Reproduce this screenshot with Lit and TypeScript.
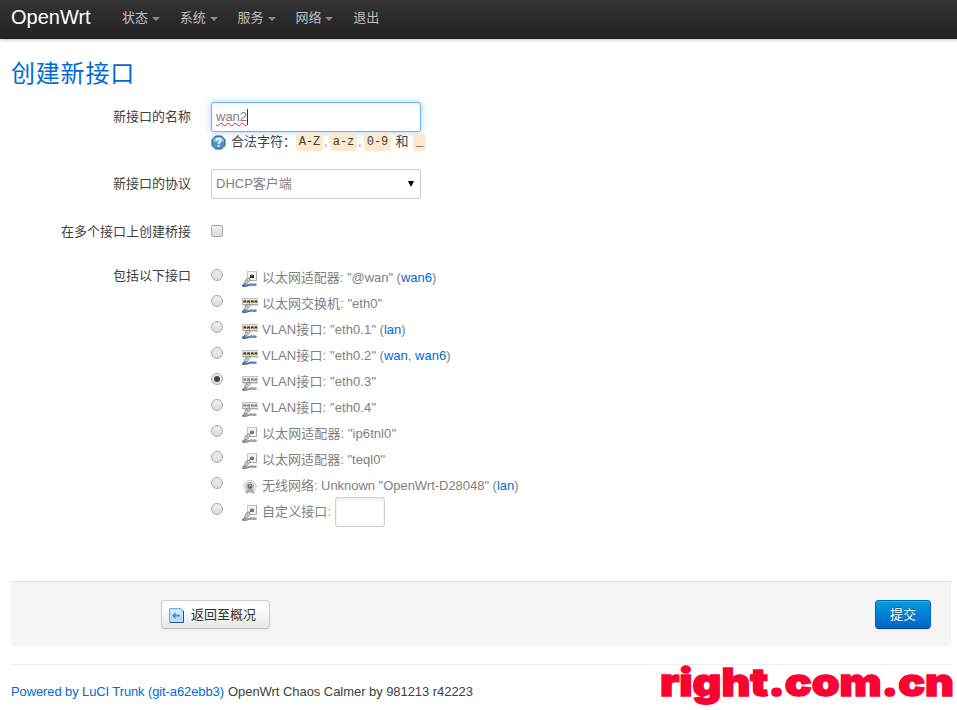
import { LitElement, html, css, svg, nothing } from "lit";
import { customElement, property } from "lit/decorators.js";

type IconKind = "adapter" | "switch" | "wifi";

interface Iface {
  kind: IconKind;
  active: boolean;
  label: string;
  width: number;
  links?: string[];
  checked?: boolean;
  custom?: boolean;
}

const MENU: { text: string; drop: boolean }[] = [
  { text: "状态", drop: true },
  { text: "系统", drop: true },
  { text: "服务", drop: true },
  { text: "网络", drop: true },
  { text: "退出", drop: false },
];

const IFACES: Iface[] = [
  { kind: "adapter", active: true, label: '以太网适配器: "@wan"', width: 131, links: ["wan6"] },
  { kind: "switch", active: true, label: '以太网交换机: "eth0"', width: 120 },
  { kind: "switch", active: true, label: 'VLAN接口: "eth0.1"', width: 114, links: ["lan"] },
  { kind: "switch", active: true, label: 'VLAN接口: "eth0.2"', width: 114, links: ["wan", "wan6"] },
  { kind: "switch", active: false, label: 'VLAN接口: "eth0.3"', width: 114, checked: true },
  { kind: "switch", active: false, label: 'VLAN接口: "eth0.4"', width: 114 },
  { kind: "adapter", active: false, label: '以太网适配器: "ip6tnl0"', width: 134 },
  { kind: "adapter", active: false, label: '以太网适配器: "teql0"', width: 123 },
  { kind: "wifi", active: false, label: '无线网络: Unknown "OpenWrt-D28048"', width: 227, links: ["lan"] },
  { kind: "adapter", active: false, label: "自定义接口:", width: 69, custom: true },
];

@customElement("iface-icon")
export class IfaceIcon extends LitElement {
  @property() kind: IconKind = "adapter";
  @property({ type: Boolean }) active = false;

  static styles = css`
    :host { display: block; width: 16px; height: 16px; }
    svg { display: block; }
  `;

  private cable() {
    const c = this.active ? "#5f8fc8" : "#a2a2a2";
    const d = this.active ? "#3c659e" : "#858585";
    return svg`
      <path d="M4.5 8 L7.5 6.8 L8 9 L5.5 12.2 L3 13.2 L2.8 11 Z" fill="#dcdcdc" stroke="#737373" stroke-width=".8"/>
      <path d="M4.6 9 L6 10.4" stroke="#555" stroke-width=".7"/>
      <path d="M3.2 12.8 L1 14.8 C5 15.8 7.5 13 10 13.6 S13 14 14.5 13.4" fill="none" stroke="${d}" stroke-width="2"/>
      <path d="M2 14.2 C5 15 7.5 12.6 10 13.1 S13 13.5 14.2 13" fill="none" stroke="${c}" stroke-width="1.2"/>`;
  }

  render() {
    if (this.kind === "wifi") {
      return html`<svg width="16" height="16" viewBox="0 0 16 16">
        <g fill="none" stroke="#c4c4c4" stroke-width="1">
          <circle cx="8" cy="7.3" r="6"/><circle cx="8" cy="7.3" r="4" stroke="#a2a2a2"/>
        </g>
        <circle cx="8" cy="7.2" r="2.7" fill="#6e6e6e"/>
        <circle cx="8" cy="6.6" r="1" fill="#bbb"/>
        <path d="M5 10.5 L3 15 L6.3 12.6 Z M11 10.5 L13 15 L9.7 12.6 Z" fill="#969696"/>
        <path d="M6 10 H10 L12 15 L8 12.6 L4 15 Z" fill="#a8a8a8"/>
      </svg>`;
    }
    if (this.kind === "adapter") {
      return html`<svg width="16" height="16" viewBox="0 0 16 16">
        <rect x="5.5" y=".5" width="9" height="9" fill="#f2f2f2" stroke="#c6c6c6"/>
        <path d="M14.5 1 V9.5 H8" fill="none" stroke="#aaa"/>
        <rect x="8" y="4" width="4" height="3" fill="${this.active ? "#2c2c2c" : "#777"}"/>
        <rect x="9" y="3.3" width="2" height="1.2" fill="${this.active ? "#949427" : "#999"}"/>
        ${this.cable()}
      </svg>`;
    }
    const hole = this.active ? "#333" : "#7d7d7d";
    const pin = this.active ? "#d2c63a" : "#c8c8c8";
    return html`<svg width="16" height="16" viewBox="0 0 16 16">
      <rect x="0" y="1" width="16" height="7" fill="#e7e7e7"/>
      <path d="M0 1.5 H16 M.5 1 V8" stroke="#c2c2c2"/>
      <path d="M1 7.8 H16" stroke="#8c8c8c"/>
      ${[1.5, 5.2, 8.9, 12.6].map(
        (x) => svg`<rect x=${x} y="3.4" width="2.7" height="2.6" fill=${hole}/><rect x=${x + 0.6} y="5" width="1.5" height="1.2" fill=${pin}/>`
      )}
      ${this.cable()}
    </svg>`;
  }
}

@customElement("fit-text")
export class FitText extends LitElement {
  @property() text = "";
  @property({ type: Number }) width = 0;

  static styles = css`
    :host { display: inline-block; vertical-align: top; }
    svg { display: block; overflow: visible; }
    text { fill: currentColor; font: inherit; white-space: pre; }
  `;

  render() {
    return html`<svg width=${this.width} height="18"><text x="0" y="13" textLength=${this.width}>${this.text}</text></svg>`;
  }
}

@customElement("app-root")
export class AppRoot extends LitElement {
  static styles = css`
    :host {
      display: block;
      position: relative;
      height: 710px;
      overflow: hidden;
      background: #fff;
      color: #404040;
      font: 13px/18px "Liberation Sans", "Noto Sans CJK SC", sans-serif;
    }
    * { box-sizing: border-box; }
    a { color: #0069d6; text-decoration: none; }
    .bar {
      height: 39px;
      display: flex;
      align-items: flex-start;
      padding-left: 11px;
      background: linear-gradient(#333, #222);
      box-shadow: 0 1px 3px rgba(0, 0, 0, .25), inset 0 -1px 0 rgba(0, 0, 0, .1);
    }
    .brand { width: 111px; color: #fff; font-size: 20px; line-height: 34px; }
    .menu { display: flex; }
    .item { width: 57.8px; display: flex; color: #bfbfbf; line-height: 36px; }
    .caret {
      margin: 17px 0 0 4px;
      width: 0;
      height: 0;
      border: 4px solid transparent;
      border-top-color: #8a8a8a;
      border-bottom: 0;
    }
    .content { padding: 17px 6px 0 11px; }
    h2 { margin: 0; height: 36px; font-size: 24px; line-height: 36px; font-weight: 400; color: #0069d6; letter-spacing: .8px; }
    .form { padding-top: 10px; display: grid; grid-template-columns: 180px 1fr; column-gap: 20px; grid-template-rows: 67px 54px 43px 1fr; }
    .label { text-align: right; line-height: 18px; padding-top: 6px; }
    .label.check { padding-top: 0; }
    .label.list { padding-top: 1px; }
    .box {
      width: 210px;
      height: 30px;
      border: 1px solid #ccc;
      border-radius: 3px;
      background: #fff;
      color: #808080;
      display: flex;
      align-items: center;
      padding: 0 4px;
      box-shadow: inset 0 1px 3px rgba(0, 0, 0, .1);
    }
    .box.focus { border-color: #6cb5ed; box-shadow: inset 0 1px 3px rgba(0, 0, 0, .1), 0 0 7px rgba(82, 168, 236, .55); }
    .box.select { justify-content: space-between; padding-right: 6px; box-shadow: none; }
    .box.small { width: 50px; margin: -6px 0 0 4px; }
    .typed { text-decoration: underline wavy #e8262c 1px; text-underline-offset: 1px; text-decoration-skip-ink: none; }
    .cursor { width: 1px; height: 16px; background: #333; }
    .arrow { border: 3.5px solid transparent; border-top: 6px solid #000; border-bottom: 0; }
    .hint { display: flex; align-items: center; height: 18px; margin-top: 1px; white-space: pre; }
    .hint svg { margin: 1px 5px 0 0; }
    .comma { color: #999; width: 7px; padding-left: 1px; }
    code {
      height: 17px;
      width: 27px;
      text-align: center;
      border-radius: 3px;
      background: #fee9cc;
      font: 12px/17px "Liberation Mono", monospace;
      color: #404040;
    }
    .and { width: 22px; text-align: center; }
    .under { width: 13px; }
    .tick { display: block; width: 12px; height: 12px; margin-top: 2px; border: 1px solid #aaa; border-radius: 2px; background: linear-gradient(#eee, #ddd); }
    .row { height: 26px; display: flex; align-items: flex-start; }
    .radio { width: 12px; height: 12px; margin: 3px 19px 0 0; flex: none; border: 1px solid #aaa; border-radius: 50%; background: linear-gradient(#eee, #dcdcdc); display: grid; place-items: center; }
    .dot { width: 6px; height: 6px; border-radius: 50%; background: #444; }
    iface-icon { margin: 5px 4px 0 0; }
    .desc { color: #808080; display: flex; padding-top: 3px; white-space: pre; }
    .actions {
      margin-top: 55px;
      margin-right: 0;
      height: 65px;
      padding: 18px 20px 0 150px;
      border-top: 1px solid #ddd;
      border-radius: 0 0 3px 3px;
      background: #f5f5f5;
      display: flex;
      justify-content: space-between;
      align-items: flex-start;
    }
    .btn {
      height: 29px;
      border: 1px solid #ccc;
      border-bottom-color: #bbb;
      border-radius: 4px;
      background: linear-gradient(#fff 25%, #e6e6e6);
      box-shadow: inset 0 1px 0 rgba(255, 255, 255, .2), 0 1px 2px rgba(0, 0, 0, .05);
      color: #333;
      line-height: 27px;
      display: flex;
      padding: 0 7px;
      width: 109px;
    }
    .btn svg { margin: 7px 7px 0 0; }
    .btn.primary { width: 56px; padding: 0 14px; color: #fff; background: linear-gradient(#049cdb, #0064cd); border-color: #0064cd #0064cd #003f81; text-shadow: 0 -1px 0 rgba(0, 0, 0, .25); }
    .footer { margin-top: 18px; border-top: 1px solid #eee; padding-top: 18px; display: flex; }
    .mark { position: absolute; left: 656px; top: 662px; }
    .mark text { font-family: Inter, sans-serif; font-weight: 900; font-size: 39px; fill: #ff0033; stroke: #ff0033; stroke-width: 1.5px; }
  `;

  private renderRow(i: Iface) {
    return html`<div class="row">
      <span class="radio">${i.checked ? html`<span class="dot"></span>` : nothing}</span>
      <iface-icon kind=${i.kind} ?active=${i.active}></iface-icon>
      <span class="desc"
        ><fit-text text=${i.label} width=${i.width}></fit-text>${i.links
          ? html`<span> (${i.links.map((l, n) => html`${n ? ", " : ""}<a>${l}</a>`)})</span>`
          : nothing}${i.custom ? html`<span class="box small"></span>` : nothing}</span>
    </div>`;
  }

  render() {
    return html`
      <header class="bar">
        <span class="brand"><span>OpenWrt</span></span>
        <nav class="menu">
          ${MENU.map((m) => html`<span class="item">${m.text}${m.drop ? html`<i class="caret"></i>` : nothing}</span>`)}
        </nav>
      </header>
      <main class="content">
        <h2>创建新接口</h2>
        <section class="form">
          <span class="label">新接口的名称</span>
          <div>
            <div class="box focus"><span class="typed">wan2</span><i class="cursor"></i></div>
            <div class="hint">
              <svg width="15" height="15" viewBox="0 0 15 15">
                <path d="M4.5 1 H10.5 L14 4.5 V10.5 L10.5 14 H4.5 L1 10.5 V4.5 Z" fill="#4d93d2" stroke="#27588f"/>
                <path d="M4.8 2 H10.2 L13 4.8 V7 H2 V4.8 Z" fill="#79b5e5"/>
                <path d="M5.3 5.7 C5.3 2.9 9.8 3.1 9.8 5.5 C9.8 7 7.6 7 7.6 8.9" fill="none" stroke="#fff" stroke-width="1.6"/>
                <rect x="6.7" y="10" width="1.8" height="1.8" fill="#fff"/>
              </svg><span>合法字符：</span><code>A-Z</code><span class="comma">,</span><code>a-z</code><span class="comma">,</span><code>0-9</code><span class="and">和</span><code class="under">_</code>
            </div>
          </div>
          <span class="label">新接口的协议</span>
          <div><div class="box select"><span>DHCP客户端</span><i class="arrow"></i></div></div>
          <span class="label check">在多个接口上创建桥接</span>
          <div><i class="tick"></i></div>
          <span class="label list">包括以下接口</span>
          <div>${IFACES.map((i) => this.renderRow(i))}</div>
        </section>
        <section class="actions">
          <span class="btn"><svg width="15" height="15" viewBox="0 0 15 15">
              <path d="M.5 .5 H12 L14.5 3 V14.5 H.5 Z" fill="#b9dcf8" stroke="#7eace0"/>
              <path d="M14.5 3 V14.5 H1" fill="none" stroke="#31537f"/>
              <path d="M2 2 H11 V5 H13 V7 H2 Z" fill="#dcedfb"/>
              <path d="M3 7.5 L6.5 4 V6.5 H11 V8.5 H6.5 V11 Z" fill="#4a8cd8"/>
            </svg>返回至概况</span>
          <span class="btn primary">提交</span>
        </section>
        <footer class="footer">
          <a><fit-text text="Powered by LuCI Trunk (git-a62ebb3)" width="213"></fit-text></a>
          <fit-text style="margin-left:4px" text="OpenWrt Chaos Calmer by 981213 r42223" width="245"></fit-text>
        </footer>
      </main>
      <svg class="mark" width="301" height="48"><text x="4" y="34" textLength="294" lengthAdjust="spacingAndGlyphs">right.com.cn</text></svg>
    `;
  }
}
